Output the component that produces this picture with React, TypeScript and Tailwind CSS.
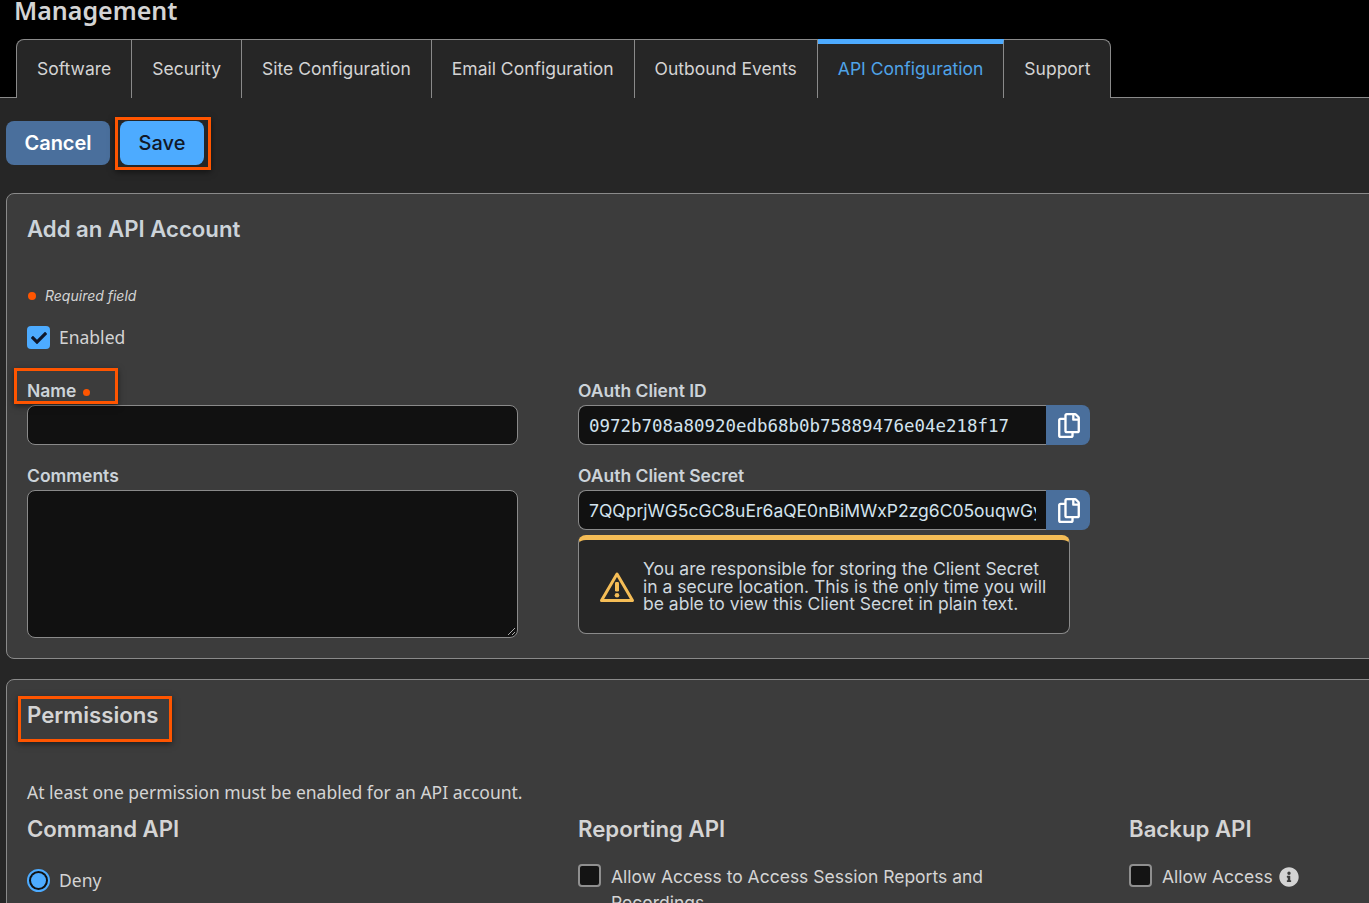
import React from 'react';
import { FaRegCopy, FaCheck, FaInfoCircle } from 'react-icons/fa';

const tabs = ['Software', 'Security', 'Site Configuration', 'Email Configuration', 'Outbound Events', 'API Configuration', 'Support'];

function WarnIcon() {
  return (
    <svg width="36" height="32" viewBox="0 0 36 32" fill="none" className="shrink-0">
      <path d="M18 3 L33.5 29.5 H2.5 Z" stroke="#f5bd56" strokeWidth="3" strokeLinejoin="round" />
      <rect x="16" y="11" width="4" height="9.5" rx="1.2" fill="#f5bd56" />
      <circle cx="18" cy="24.3" r="2.3" fill="#f5bd56" />
    </svg>
  );
}

function CopyField({ value, mono }: { value: string; mono?: boolean }) {
  return (
    <div className="flex h-10 w-[512px]">
      <div className={`flex-1 min-w-0 whitespace-nowrap bg-[#111111] border border-[#8a8a8a] border-r-0 rounded-l-lg pl-[10px] pr-[10px] pt-px leading-[38px] text-[#d3e3ee] ${mono ? "font-['DejaVu_Sans_Mono'] text-[17.45px]" : 'text-[17.5px]'}`}>
        <div className="overflow-hidden">{value}</div>
      </div>
      <div className="w-[44px] pl-[2px] bg-[#4a6f9c] rounded-r-lg flex items-center justify-center text-white">
        <FaRegCopy className="w-[22px] h-[25px]" />
      </div>
    </div>
  );
}

function Checkbox() {
  return <span className="w-[23px] h-[23px] shrink-0 rounded-[4px] bg-[#141414] border-2 border-[#8f8f8f]" />;
}

export default function App() {
  return (
    <div className="relative h-[903px] w-[1369px] overflow-hidden bg-[#262626] font-['Inter',sans-serif] text-[#d4d4d4]">
      <div className="h-[98px] bg-black border-b border-[#8a8a8a] relative">
        <h1 className="absolute left-[14px] top-[-6px] font-['Noto_Sans'] font-semibold text-[25px] leading-[33px] text-[#d4d4d4]">Management</h1>
        <div className="absolute left-4 top-[39px] flex h-[59px] bg-[#262626] border border-[#8a8a8a] border-b-0 rounded-t-lg">
          {tabs.map((tab, i) => {
            const active = tab === 'API Configuration';
            return (
              <div
                key={tab}
                className={`px-5 flex items-center text-[17.5px] ${i < tabs.length - 1 ? 'border-r border-[#8a8a8a]' : ''} ${active ? 'text-[#4fa3e8] border-t-[5px] border-t-[#4dabff] -mt-px pb-[3px]' : 'pt-[1px]'}`}
              >
                {tab}
              </div>
            );
          })}
        </div>
      </div>

      <div className="pl-[6px]">
        <div className="flex gap-[10px] pt-[23px] h-[95px]">
          <button className="w-[104px] h-[44px] rounded-lg bg-[#4a6f9c] text-white font-semibold text-[20px]">Cancel</button>
          <button className="w-[84px] h-[44px] rounded-lg bg-[#4dabff] text-[#111827] font-medium text-[20px]">Save</button>
        </div>

        <section className="w-[1500px] h-[466px] bg-[#3c3c3c] border border-[#8a8a8a] rounded-lg pl-5 pt-[20px]">
          <h2 className="text-[22.2px] leading-[30px] font-semibold text-[#ccd3d9]">Add an API Account</h2>
          <div className="flex items-center mt-[41px] h-5 text-[14px] italic">
            <span className="ml-px mt-px w-[8px] h-[8px] rounded-full bg-[#ff5500]" />
            <span className="ml-[9px]">Required field</span>
          </div>
          <div className="flex items-center mt-[21px] h-[23px]">
            <span className="w-[23px] h-[23px] rounded-[4px] bg-[#4dabff] flex items-center justify-center text-[#0f172a]">
              <FaCheck className="w-[16px] h-[16px]" />
            </span>
            <span className="ml-[9px] font-['Noto_Sans'] text-[17.5px]">Enabled</span>
          </div>
          <div className="flex mt-[30px]">
            <div className="w-[491px]">
              <label className="flex items-center h-[24px] text-[17.5px] font-semibold text-[#ccd3d9]">
                Name
                <span className="ml-[7px] mt-[3px] w-[7px] h-[7px] rounded-full bg-[#ff5500]" />
              </label>
              <div className="mt-[2px] h-10 bg-[#111111] border border-[#8a8a8a] rounded-lg" />
              <label className="block mt-[19px] h-[24px] leading-[24px] text-[17.5px] font-semibold text-[#ccd3d9]">Comments</label>
              <div className="relative mt-[2px] h-[148px] bg-[#111111] border border-[#8a8a8a] rounded-lg">
                <svg width="10" height="10" viewBox="0 0 10 10" className="absolute right-[1px] bottom-[1px]">
                  <path d="M9 2 L2 9 M9 6 L6 9" stroke="#aaaaaa" strokeWidth="1" />
                </svg>
              </div>
            </div>
            <div className="ml-[60px]">
              <label className="block h-[24px] leading-[24px] text-[17.5px] font-semibold text-[#ccd3d9]">OAuth Client ID</label>
              <div className="mt-[2px]"><CopyField mono value="0972b708a80920edb68b0b75889476e04e218f17" /></div>
              <label className="block mt-[19px] h-[24px] leading-[24px] text-[17.5px] font-semibold text-[#ccd3d9]">OAuth Client Secret</label>
              <div className="mt-[2px]"><CopyField value="7QQprjWG5cGC8uEr6aQE0nBiMWxP2zg6C05ouqwGyLk9" /></div>
              <div className="mt-[5px] w-[492px] h-[99px] bg-[#262626] border border-[#8a8a8a] border-t-[5px] border-t-[#f5bd56] rounded-lg flex items-center pl-[20px] pr-4">
                <WarnIcon />
                <p className="ml-[8px] text-[17.5px] leading-[17.5px] whitespace-nowrap text-[#cfd8df]">
                  You are responsible for storing the Client Secret<br />
                  in a secure location. This is the only time you will<br />
                  be able to view this Client Secret in plain text.
                </p>
              </div>
            </div>
          </div>
        </section>

        <section className="w-[1500px] mt-5 h-[400px] bg-[#3c3c3c] border border-[#8a8a8a] rounded-lg pl-5 pt-[20px]">
          <h2 className="text-[22.2px] leading-[30px] font-semibold text-[#d4d4d4]">Permissions</h2>
          <p className="mt-[50px] font-['Noto_Sans'] text-[17.5px] leading-[24px]">At least one permission must be enabled for an API account.</p>
          <div className="grid grid-cols-[551px_551px_300px] mt-[10px]">
            <div>
              <h3 className="text-[22.2px] leading-[30px] font-semibold">Command API</h3>
              <div className="flex items-center mt-[25px] h-[23px]">
                <span className="w-[23px] h-[23px] rounded-full bg-[#111111] border-2 border-[#4dabff] flex items-center justify-center">
                  <span className="w-[15px] h-[15px] rounded-full bg-[#4dabff]" />
                </span>
                <span className="ml-[9px] font-['Noto_Sans'] text-[17.5px]">Deny</span>
              </div>
            </div>
            <div>
              <h3 className="text-[22.2px] leading-[30px] font-semibold">Reporting API</h3>
              <div className="flex mt-[20px] w-[440px]">
                <Checkbox />
                <span className="ml-[10px] text-[17.5px] leading-[26px] mt-0">Allow Access to Access Session Reports and Recordings</span>
              </div>
            </div>
            <div>
              <h3 className="text-[22.2px] leading-[30px] font-semibold">Backup API</h3>
              <div className="flex items-start mt-[20px]">
                <Checkbox />
                <span className="ml-[10px] text-[17.5px] leading-[26px]">Allow Access</span>
                <FaInfoCircle className="ml-[6px] mt-[3px] w-[20px] h-[20px] text-[#d4d4d4]" />
              </div>
            </div>
          </div>
        </section>
      </div>

      {/* annotation boxes drawn over the page */}
      <div className="absolute left-[115px] top-[117px] w-[96px] h-[53px] border-[3px] border-[#ff5500] shadow-[0_2px_6px_rgba(0,0,0,0.5)]" />
      <div className="absolute left-[14px] top-[368px] w-[104px] h-[36px] border-[3px] border-[#ff5500] shadow-[0_2px_6px_rgba(0,0,0,0.5)]" />
      <div className="absolute left-[18px] top-[696px] w-[154px] h-[46px] border-[3px] border-[#ff5500] shadow-[0_2px_6px_rgba(0,0,0,0.5)]" />
    </div>
  );
}
